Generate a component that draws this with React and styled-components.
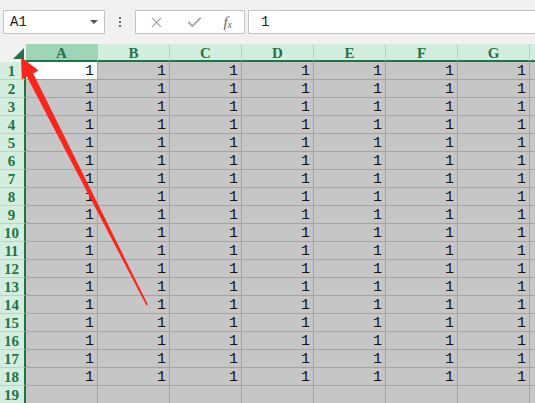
import React from "react";
import styled, { createGlobalStyle } from "styled-components";
import { X, Check } from "lucide-react";

const COLS = ["A", "B", "C", "D", "E", "F", "G", "H"];
const ROWS = Array.from({ length: 19 }, (_, i) => i + 1);

const App = () => {
  return (
    <Page>
      <GlobalStyle />
      <Toolbar>
        <NameBox>
          <span>A1</span>
          <Caret />
        </NameBox>
        <Dots>
          <i />
          <i />
          <i />
        </Dots>
        <FormulaTools>
          <X size={17} strokeWidth={1.5} color="#a8a8a8" />
          <Check size={17} strokeWidth={2.6} color="#a8a8a8" />
          <Fx>
            f<sub>x</sub>
          </Fx>
        </FormulaTools>
        <FormulaInput>1</FormulaInput>
      </Toolbar>
      <Sheet>
        <Grid>
          <Corner>
            <CornerMark />
          </Corner>
          {COLS.map((c) => (
            <ColHead key={c} $active={c === "A"}>
              {c !== "H" ? c : ""}
            </ColHead>
          ))}
          {ROWS.map((r) => (
            <React.Fragment key={r}>
              <RowHead>{r}</RowHead>
              {COLS.map((c) => (
                <Cell key={c} $active={r === 1 && c === "A"}>
                  {r < 19 && c !== "H" ? "1" : ""}
                </Cell>
              ))}
            </React.Fragment>
          ))}
        </Grid>
        <Arrow width="535" height="403" viewBox="0 0 535 403">
          <polygon
            points="21,57 38.5,70.5 33.2,73.4 147.8,304.6 146.4,305.4 26.8,76.6 21.8,79.5"
            fill="#f8261c"
          />
        </Arrow>
      </Sheet>
    </Page>
  );
};

export default App;

const GlobalStyle = createGlobalStyle`
  html, body {
    margin: 0;
    padding: 0;
    overflow: hidden;
    background: #f1f1f1;
  }
`;
const Page = styled.div`
  width: 535px;
  height: 403px;
  overflow: hidden;
  display: flex;
  flex-direction: column;
  background: #f1f1f1;
`;
const Toolbar = styled.div`
  height: 44px;
  flex: none;
  display: flex;
  align-items: flex-start;
  padding-top: 10px;
  box-sizing: border-box;
`;
const NameBox = styled.div`
  margin-left: 3px;
  width: 102px;
  height: 24px;
  box-sizing: border-box;
  border: 1px solid #c4c4c4;
  background: #fff;
  display: flex;
  align-items: center;
  justify-content: space-between;
  padding: 0 6px 0 6px;
  font-family: "Liberation Mono", monospace;
  font-size: 14px;
  color: #222;
`;
const Caret = styled.div`
  width: 0;
  height: 0;
  border-left: 4px solid transparent;
  border-right: 4px solid transparent;
  border-top: 4px solid #555;
`;
const Dots = styled.div`
  width: 30px;
  height: 24px;
  display: flex;
  flex-direction: column;
  align-items: center;
  justify-content: center;
  gap: 2px;
  i {
    width: 2px;
    height: 2px;
    background: #666;
  }
`;
const FormulaTools = styled.div`
  width: 110px;
  height: 24px;
  box-sizing: border-box;
  border: 1px solid #c4c4c4;
  background: #fff;
  display: flex;
  align-items: center;
  justify-content: space-between;
  padding: 0 12px 0 12px;
`;
const Fx = styled.span`
  font-family: "Liberation Serif", serif;
  font-style: italic;
  font-size: 15px;
  color: #666;
  sub {
    font-size: 10px;
    vertical-align: -1px;
  }
`;
const FormulaInput = styled.div`
  margin-left: 3px;
  flex: 1;
  height: 24px;
  box-sizing: border-box;
  border: 1px solid #c4c4c4;
  border-right: none;
  background: #fff;
  display: flex;
  align-items: center;
  padding-left: 12px;
  font-family: "Liberation Mono", monospace;
  font-size: 14px;
  color: #222;
`;
const Sheet = styled.div`
  position: relative;
  flex: 1;
  overflow: hidden;
`;
const Grid = styled.div`
  display: grid;
  grid-template-columns: 26px repeat(8, 72px);
  grid-auto-rows: 18px;
`;
const Corner = styled.div`
  position: relative;
  background: #f1f1f1;
`;
const CornerMark = styled.div`
  position: absolute;
  right: 2px;
  bottom: 3px;
  width: 0;
  height: 0;
  border-left: 11px solid transparent;
  border-bottom: 11px solid #217346;
`;
const ColHead = styled.div`
  background: ${(p) => (p.$active ? "#9fd5b7" : "#d3eedf")};
  border-right: 1px solid ${(p) => (p.$active ? "#9fd5b7" : "#b8cfc2")};
  border-bottom: 2px solid #217346;
  display: flex;
  align-items: center;
  justify-content: center;
  padding-top: 2px;
  font-family: "Liberation Serif", serif;
  font-weight: bold;
  font-size: 15px;
  color: #217346;
  box-sizing: border-box;
`;
const RowHead = styled.div`
  background: #d3eedf;
  border-right: 2px solid #217346;
  border-bottom: 1px solid #bcd3c6;
  display: flex;
  align-items: center;
  justify-content: center;
  font-family: "Liberation Serif", serif;
  font-weight: bold;
  font-size: 15px;
  color: #217346;
  box-sizing: border-box;
  padding: 2px 1px 0 0;
`;
const Cell = styled.div`
  background: ${(p) => (p.$active ? "#ffffff" : "#c6c6c6")};
  border-right: 1px solid #a3a3a3;
  border-bottom: 1px solid #a3a3a3;
  box-sizing: border-box;
  display: flex;
  align-items: center;
  justify-content: flex-end;
  padding: 2px 3px 0 0;
  font-family: "Liberation Mono", monospace;
  font-size: 15px;
  color: #111;
`;
const Arrow = styled.svg`
  position: absolute;
  left: 0;
  top: -44px;
  pointer-events: none;
`;
